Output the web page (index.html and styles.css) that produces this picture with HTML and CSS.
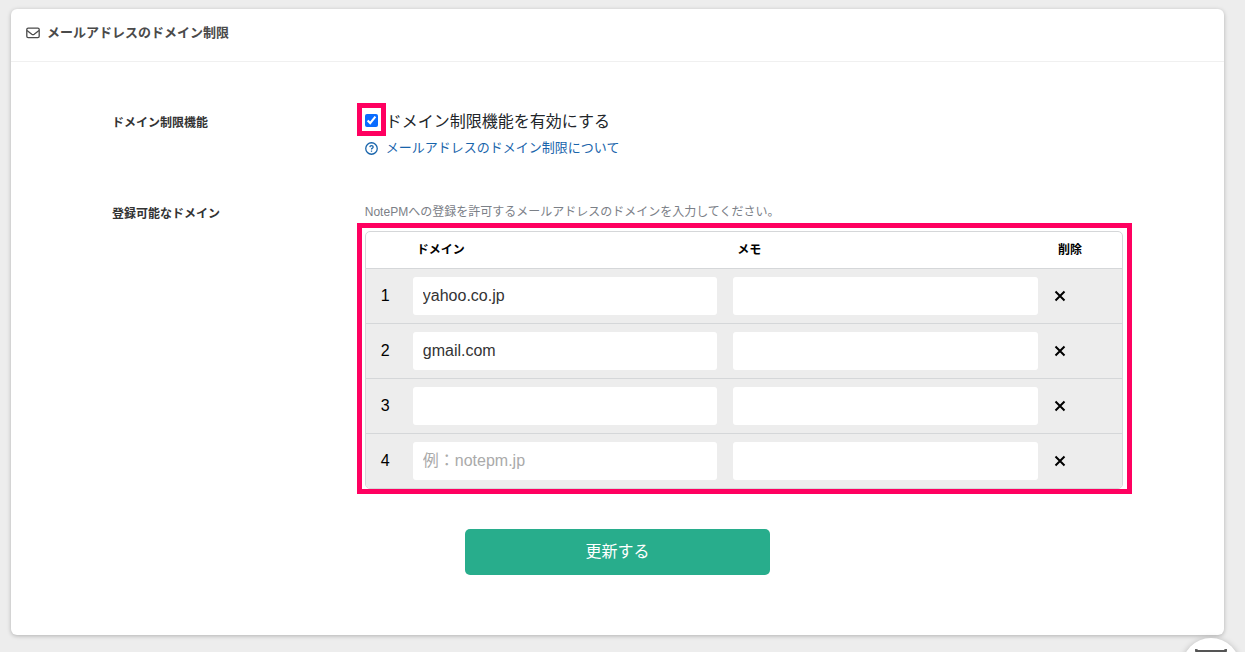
FILE: index.html
```html
<!DOCTYPE html>
<html lang="ja">
<head>
<meta charset="utf-8">
<title>メールアドレスのドメイン制限</title>
<link rel="stylesheet" href="styles.css">
</head>
<body>
<main class="card">
  <header class="card-header">
    <svg class="icon-mail" viewBox="0 0 14 12" aria-hidden="true"><rect x="0.8" y="1.1" width="12.4" height="9.6" rx="1.4"/><path d="M1 3.6 L5.8 7.3 Q7 8.1 8.2 7.3 L13 3.6"/></svg>
    <h1 class="card-title">メールアドレスのドメイン制限</h1>
  </header>
  <form class="form">
    <section class="form-row">
      <h2 class="form-label">ドメイン制限機能</h2>
      <div class="form-body">
        <div class="check">
          <span class="marked marked-check"><input class="check-box" type="checkbox" id="enable" checked></span>
          <label class="check-label" for="enable">ドメイン制限機能を有効にする</label>
        </div>
        <a class="help-link" href="#">
          <svg class="icon-help" viewBox="0 0 14 14" aria-hidden="true"><circle cx="7" cy="7" r="6.2"/><path d="M5.2 5.5 Q5.4 4 7 4 Q8.8 4 8.8 5.5 Q8.8 6.4 7.7 6.9 Q7 7.2 7 8"/><path d="M7 9.2 V10.5"/></svg>
          <span>メールアドレスのドメイン制限について</span>
        </a>
      </div>
    </section>
    <section class="form-row">
      <h2 class="form-label">登録可能なドメイン</h2>
      <div class="form-body">
        <p class="hint">NotePMへの登録を許可するメールアドレスのドメインを入力してください。</p>
        <div class="marked marked-table">
          <table class="domains">
            <thead>
              <tr><th class="col-number"></th><th>ドメイン</th><th>メモ</th><th class="col-delete">削除</th></tr>
            </thead>
            <tbody>
              <tr><td class="number">1</td><td><input class="field" type="text" aria-label="ドメイン 1" value="yahoo.co.jp"></td><td><input class="field" type="text" aria-label="メモ 1"></td><td><button class="delete" type="button" aria-label="削除 1"><svg class="icon-x" viewBox="0 0 12 12"><path d="M1.5 1.5 L10.5 10.5 M10.5 1.5 L1.5 10.5"/></svg></button></td></tr>
              <tr><td class="number">2</td><td><input class="field" type="text" aria-label="ドメイン 2" value="gmail.com"></td><td><input class="field" type="text" aria-label="メモ 2"></td><td><button class="delete" type="button" aria-label="削除 2"><svg class="icon-x" viewBox="0 0 12 12"><path d="M1.5 1.5 L10.5 10.5 M10.5 1.5 L1.5 10.5"/></svg></button></td></tr>
              <tr><td class="number">3</td><td><input class="field" type="text" aria-label="ドメイン 3"></td><td><input class="field" type="text" aria-label="メモ 3"></td><td><button class="delete" type="button" aria-label="削除 3"><svg class="icon-x" viewBox="0 0 12 12"><path d="M1.5 1.5 L10.5 10.5 M10.5 1.5 L1.5 10.5"/></svg></button></td></tr>
              <tr><td class="number">4</td><td><input class="field" type="text" aria-label="ドメイン 4" placeholder="例：notepm.jp"></td><td><input class="field" type="text" aria-label="メモ 4"></td><td><button class="delete" type="button" aria-label="削除 4"><svg class="icon-x" viewBox="0 0 12 12"><path d="M1.5 1.5 L10.5 10.5 M10.5 1.5 L1.5 10.5"/></svg></button></td></tr>
            </tbody>
          </table>
        </div>
      </div>
    </section>
    <button class="submit" type="button">更新する</button>
  </form>
</main>
<button class="chat" type="button" aria-label="お問い合わせ">
  <svg class="icon-chat" viewBox="0 0 32 24" aria-hidden="true"><path d="M1.5 2 H30.5 V22.5 H1.5 Z"/><circle cx="1.3" cy="1.3" r="0.5"/><circle cx="30.7" cy="1.3" r="0.5"/></svg>
</button>
</body>
</html>
```

FILE: styles.css
```css
* {
  box-sizing: border-box;
}

body {
  margin: 0;
  padding: 9px 21px 17px 11px;
  background: #ededed;
  color: #333;
  font-family: "Liberation Sans", "Noto Sans CJK JP", sans-serif;
  font-size: 16px;
  line-height: 24px;
}

input,
button {
  font: inherit;
}

.card {
  background: #fff;
  border-radius: 6px;
  box-shadow: 0 1px 4px rgba(0, 0, 0, 0.25);
}

.card-header {
  display: flex;
  align-items: center;
  gap: 7px;
  padding: 12px 15px 16px;
  border-bottom: 1px solid #f0f0f0;
}

.card-title {
  margin: 0;
  color: #4a4a4a;
  font-size: 13px;
  line-height: 24px;
}

.icon-mail {
  width: 14px;
  height: 12px;
  fill: none;
  stroke: #4a4a4a;
  stroke-width: 1.3;
}

.form {
  display: flex;
  flex-direction: column;
  gap: 40px;
  padding: 47px 8.333% 60px;
}

.form-row {
  display: grid;
  grid-template-columns: 1fr 3fr;
}

.form-label {
  margin: 0;
  padding-top: 2px;
  color: #333;
  font-size: 12px;
  line-height: 24px;
}

.form-body {
  min-width: 0;
}

.check {
  display: flex;
  align-items: flex-start;
  gap: 8px;
}

.check-box {
  display: block;
  width: 13px;
  height: 13px;
  margin: 0;
  accent-color: #0a6cff;
}

.check-label {
  color: #212529;
  line-height: 26px;
}

.marked {
  position: relative;
}

.marked::after {
  content: "";
  position: absolute;
  border: 5px solid #ff0060;
  pointer-events: none;
}

.marked-check {
  margin-top: 5px;
}

.marked-check::after {
  inset: -11px -8px -9px -8px;
}

.marked-table::after {
  inset: -8px -9px -5px -8px;
}

.help-link {
  display: flex;
  align-items: center;
  gap: 8px;
  margin-top: 1px;
  color: #1864ab;
  font-size: 13px;
  text-decoration: none;
}

.icon-help {
  width: 13px;
  height: 13px;
  fill: none;
  stroke: currentColor;
  stroke-width: 1.4;
}

.hint {
  margin: 0 0 7px;
  color: #7b8087;
  font-size: 12px;
}

.domains {
  width: 100%;
  border: 1px solid #d5d7d9;
  border-radius: 5px;
  border-spacing: 0;
  table-layout: fixed;
  overflow: hidden;
}

.domains th {
  height: 36px;
  padding: 0 12px;
  color: #000;
  font-size: 12px;
  text-align: left;
}

.domains .col-number {
  width: 39px;
}

.domains .col-delete {
  width: 76px;
}

.domains td {
  padding: 8px;
  border-top: 1px solid #d5d7d9;
  background: #ededed;
  color: #000;
}

.domains .number {
  padding: 8px 0;
  text-align: center;
}

.field {
  display: block;
  width: 100%;
  height: 38px;
  padding: 0 10px;
  border: 0;
  border-radius: 3px;
  background: #fff;
  color: #333;
}

.field::placeholder {
  color: #aaa;
  opacity: 1;
}

.delete {
  display: block;
  padding: 0;
  border: 0;
  background: none;
}

.icon-x {
  display: block;
  width: 12px;
  height: 12px;
  fill: none;
  stroke: #000;
  stroke-width: 2;
}

.submit {
  align-self: center;
  width: 305px;
  height: 46px;
  border: 0;
  border-radius: 5px;
  background: #28ad8c;
  color: #fff;
}

.chat {
  position: fixed;
  right: 5px;
  bottom: -44px;
  width: 58px;
  height: 58px;
  padding: 11px 0 0;
  border: 0;
  border-radius: 50%;
  background: #fff;
  box-shadow: 0 1px 6px rgba(0, 0, 0, 0.25);
  display: flex;
  justify-content: center;
  align-items: flex-start;
}

.icon-chat {
  width: 32px;
  height: 24px;
  fill: none;
  stroke: #555;
  stroke-width: 2;
}
```
